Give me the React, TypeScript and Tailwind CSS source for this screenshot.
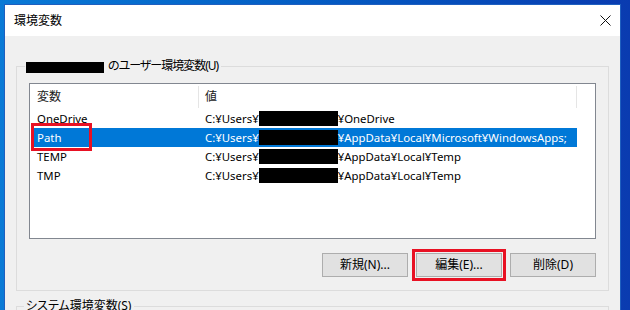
import React from "react";

const font = "font-['Noto_Sans','Noto_Sans_CJK_JP',sans-serif] [font-feature-settings:'palt']";

const rows = [
  { name: "OneDrive", tail: "¥OneDrive" },
  { name: "Path", tail: "¥AppData¥Local¥Microsoft¥WindowsApps;", selected: true },
  { name: "TEMP", tail: "¥AppData¥Local¥Temp" },
  { name: "TMP", tail: "¥AppData¥Local¥Temp" },
];

function Btn({ label, marked }: { label: string; marked?: boolean }) {
  return (
    <div className="relative shrink-0">
      <button className="w-[86px] h-[24px] border border-[#adadad] bg-[#e1e1e1] text-[12px] leading-[22px] text-black flex items-center justify-center">
        {label}
      </button>
      {marked && (
        <div className="absolute -left-[4px] -top-[4px] w-[94px] h-[32px] border-[3px] border-[#e81123]" />
      )}
    </div>
  );
}

export default function App() {
  return (
    <div className={`w-[630px] h-[310px] overflow-hidden bg-linear-to-r from-[#0a7ad6] to-[#0a3bb0] pt-[4px] pl-[4px] ${font}`}>
      <div className="w-[617px] border border-[#1f5fbf] bg-[#f0f0f0]">
        <div className="h-[31px] bg-white flex items-center justify-between pl-[9px] pr-[9px]">
          <span className="text-[12px] text-black">環境変数</span>
          <svg width="11" height="11" viewBox="0 0 11 11">
            <path d="M0.5 0.5 L10.5 10.5 M10.5 0.5 L0.5 10.5" stroke="#111" strokeWidth="1" />
          </svg>
        </div>
        <div className="px-[11px] pb-[20px] flex flex-col">
          <fieldset className="mt-[22px] border border-[#dcdcdc] pl-[12px] pr-[12px] pt-[9px] pb-[13px]">
            <legend className="-ml-[4px] pl-[1px] pr-[3px] h-[16px] flex items-center text-[12px] leading-[16px] text-black tracking-[-1px]">
              <span className="inline-block w-[78px] h-[11px] bg-black mr-[4px] mt-[2px]" />
              のユーザー環境変数(U)
            </legend>
            <div className="h-[156px] border border-[#828790] bg-white pl-[4px]">
              <div className="h-[25px] flex items-center text-[12px] text-[#1a1a1a]">
                <div className="w-[164px] shrink-0 pl-[3px]">変数</div>
                <div className="w-px h-[22px] shrink-0 bg-[#e5e5e5]" />
                <div className="w-[377px] shrink-0 pl-[6px]">値</div>
                <div className="w-px h-[22px] shrink-0 bg-[#e5e5e5]" />
              </div>
              {rows.map((r) => (
                <div
                  key={r.name}
                  className={`relative w-[543px] h-[19px] flex items-center text-[11.4px] leading-[19px] ${r.selected ? "bg-[#0078d7] text-white" : "text-black"}`}
                >
                  <div className="w-[168px] shrink-0 pl-[3px]">{r.name}</div>
                  <div className="flex items-center pl-[3px] whitespace-nowrap">
                    C:¥Users¥
                    <span className="inline-block w-[79px] h-[15px] bg-black shrink-0" />
                    {r.tail}
                  </div>
                  {r.selected && (
                    <div className="absolute -left-[3px] -top-[5px] w-[61px] h-[28px] border-[3px] border-[#e81123]" />
                  )}
                </div>
              ))}
            </div>
            <div className="mt-[14px] flex justify-end gap-[8px]">
              <Btn label="新規(N)..." />
              <Btn label="編集(E)..." marked />
              <Btn label="削除(D)" />
            </div>
          </fieldset>
          <fieldset className="mt-[7px] border border-[#dcdcdc] pl-[12px] pr-[10px] h-[60px]">
            <legend className="-ml-[5px] pl-[2px] pr-[3px] text-[12px] leading-[16px] text-black">
              システム環境変数(S)
            </legend>
          </fieldset>
        </div>
      </div>
    </div>
  );
}
